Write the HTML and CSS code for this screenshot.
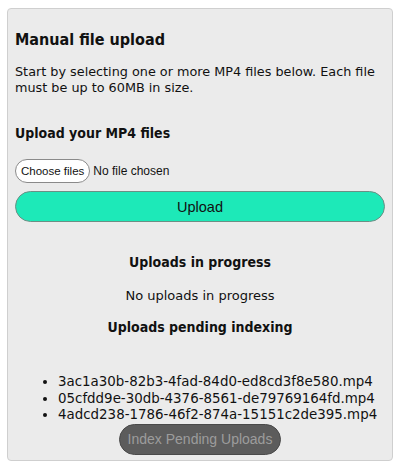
FILE: index.html
```html
<!DOCTYPE html>
<html>
<head>
<meta charset="utf-8">
<link rel="stylesheet" href="styles.css">
</head>
<body>
<div class="panel">
  <h2 class="title">Manual file upload</h2>
  <p class="intro">Start by selecting one or more MP4 files below. Each file must be up to 60MB in size.</p>
  <h3 class="label">Upload your MP4 files</h3>
  <div class="file-row">
    <span class="choose">Choose files</span>
    <span class="nofile">No file chosen</span>
  </div>
  <button class="upload">Upload</button>
  <h3 class="section">Uploads in progress</h3>
  <p class="empty">No uploads in progress</p>
  <h3 class="section">Uploads pending indexing</h3>
  <ul class="files">
    <li>3ac1a30b-82b3-4fad-84d0-ed8cd3f8e580.mp4</li>
    <li>05cfdd9e-30db-4376-8561-de79769164fd.mp4</li>
    <li>4adcd238-1786-46f2-874a-15151c2de395.mp4</li>
  </ul>
  <div class="index-row">
    <button class="index" disabled>Index Pending Uploads</button>
  </div>
</div>
</body>
</html>
```
FILE: styles.css
```css
body {
  margin: 8px 7px;
  font-family: "DejaVu Sans", sans-serif;
  color: #111;
  background: #fff;
}
.panel {
  background: #ebebeb;
  border: 1px solid #cfcfcf;
  border-radius: 4px;
  padding: 21px 7px 5px;
  min-height: 425px;
}
.title {
  font-family: "DejaVu Sans Condensed", "DejaVu Sans", sans-serif;
  font-size: 16px;
  font-weight: bold;
  margin: 0 0 14px;
  line-height: 20px;
}
.intro {
  font-size: 12.8px;
  line-height: 15.5px;
  margin: 0 0 29px;
}
.label {
  font-family: "DejaVu Sans Condensed", "DejaVu Sans", sans-serif;
  font-size: 14px;
  font-weight: bold;
  margin: 0 0 17px;
  line-height: 18px;
}
.file-row {
  display: flex;
  align-items: center;
  gap: 3px;
  font-family: "Liberation Sans", Arial, sans-serif;
  font-size: 12px;
  margin-bottom: 8px;
}
.choose {
  display: inline-block;
  background: #fff;
  border: 1px solid #8a8a8a;
  border-radius: 12px;
  padding: 0 5px;
  height: 22px;
  line-height: 22px;
  font-size: 11.5px;
}
.upload {
  display: block;
  width: 100%;
  height: 31px;
  background: #1de9b8;
  border: 1px solid #6b8f85;
  border-radius: 16px;
  font-family: "Liberation Sans", Arial, sans-serif;
  font-size: 14.5px;
  color: #111;
  margin-bottom: 31px;
}
.section {
  font-family: "DejaVu Sans Condensed", "DejaVu Sans", sans-serif;
  font-size: 14px;
  font-weight: bold;
  text-align: center;
  line-height: 18px;
  margin: 0;
}
.empty {
  text-align: center;
  font-size: 13px;
  line-height: 16px;
  margin: 17px 0 14px;
}
.files {
  font-size: 13.4px;
  line-height: 16.5px;
  margin: 38px 0 0;
  padding-left: 43px;
}
.index-row {
  display: flex;
  justify-content: center;
}
.index {
  background: #5c5c5c;
  color: #9c9c9c;
  border: 1px solid #4a4a4a;
  border-radius: 16px;
  font-family: "Liberation Sans", Arial, sans-serif;
  font-size: 14px;
  height: 31px;
  padding: 0 8px;
}
```
